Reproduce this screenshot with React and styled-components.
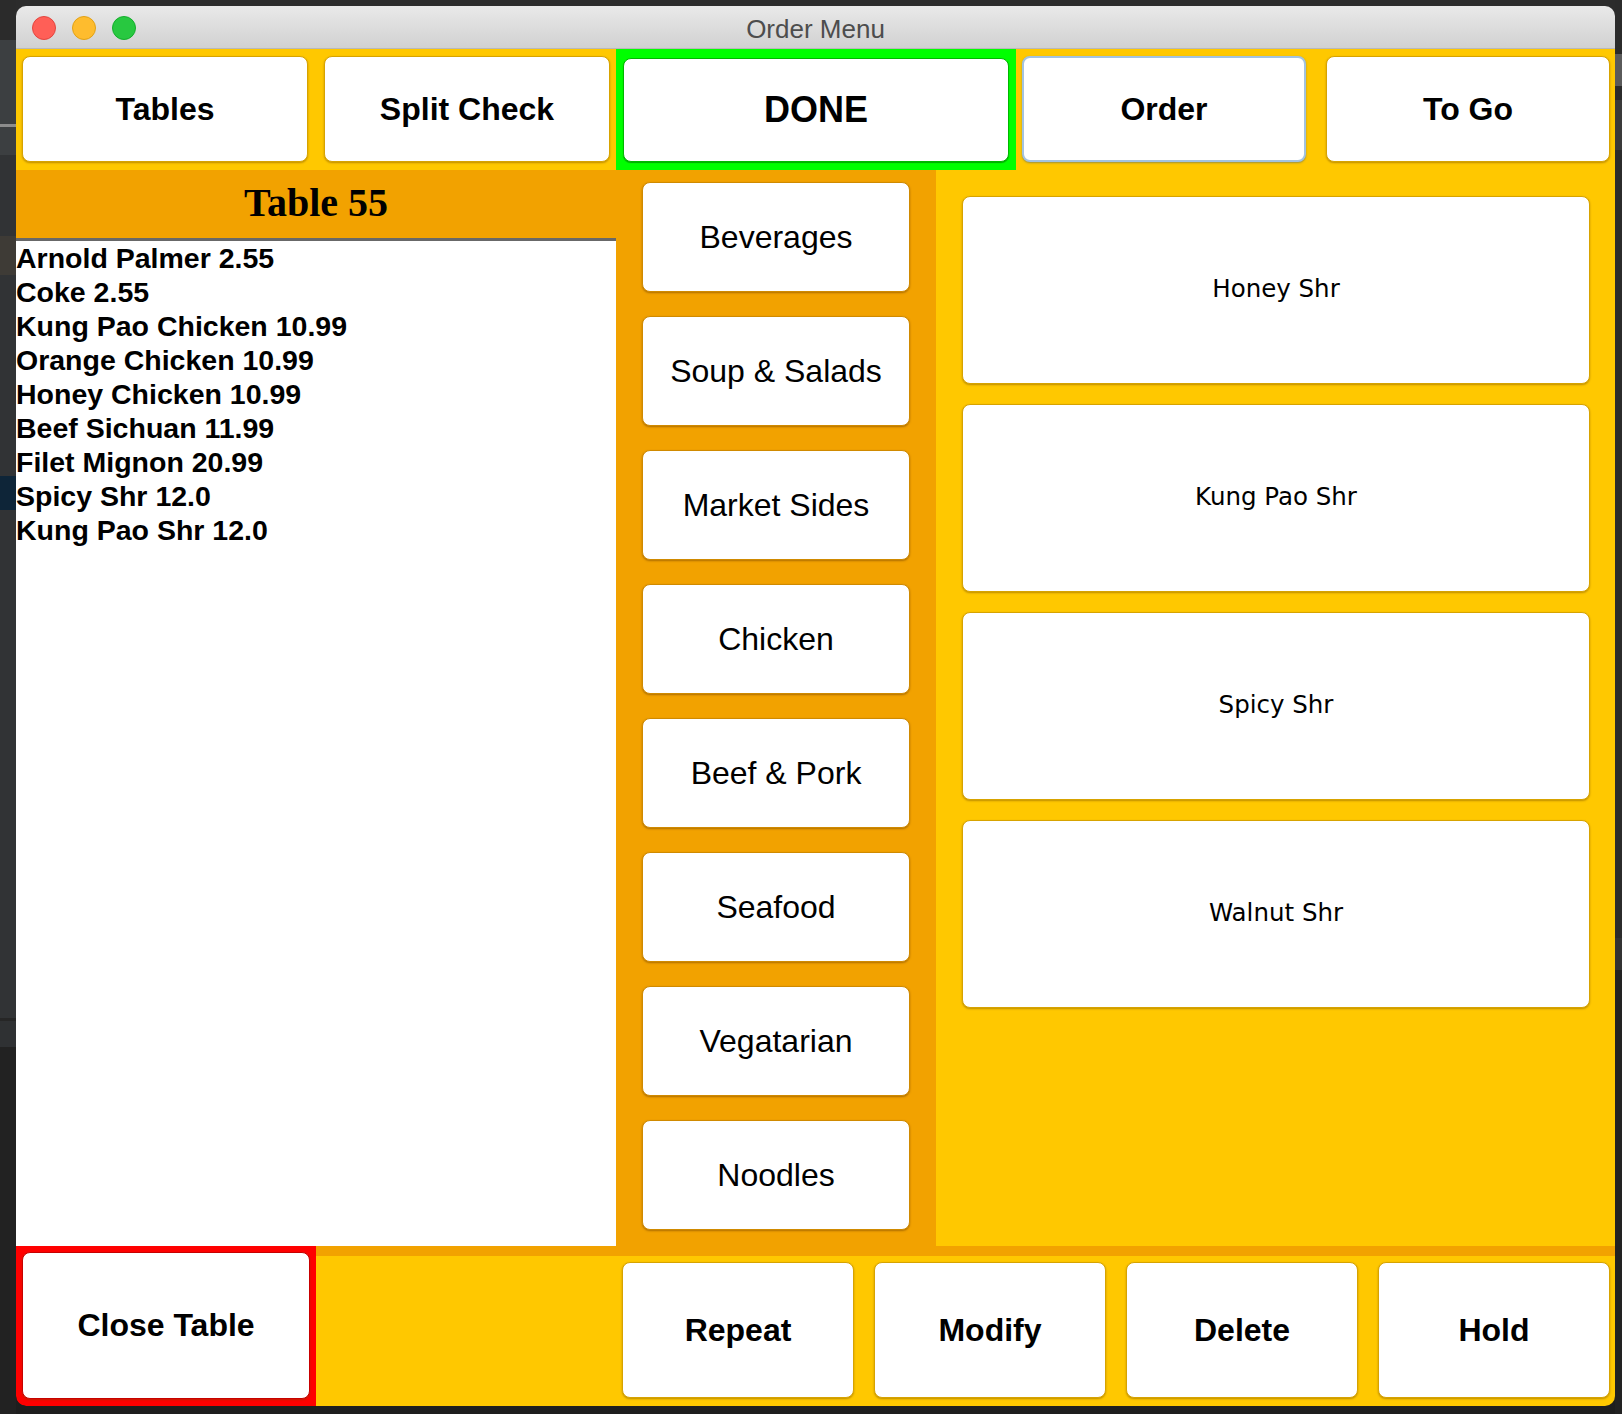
import React from 'react'
import styled, { createGlobalStyle } from 'styled-components'

const GlobalStyle = createGlobalStyle`
  html, body {
    margin: 0;
    padding: 0;
    background: #252525;
  }
  * {
    box-sizing: border-box;
  }
`

const YELLOW = '#ffc800'
const ORANGE = '#f2a200'

const Desktop = styled.div`
  display: flex;
  align-items: flex-start;
  width: 1622px;
  height: 1414px;
  background: linear-gradient(#2c2c2c 0, #2c2c2c 60px, #232323 1000px, #1e1e1e 100%);
  overflow: hidden;
`

const SideStrip = styled.div`
  display: flex;
  flex-direction: column;
  width: ${({ w }) => w}px;
  height: 1414px;
  flex-shrink: 0;
`

const Band = styled.div`
  height: ${({ h }) => h}px;
  background: ${({ color }) => color};
  flex-shrink: 0;
  ${({ grow }) => grow && 'flex: 1;'}
`

const Window = styled.div`
  display: flex;
  flex-direction: column;
  width: 1599px;
  height: 1400px;
  margin-top: 6px;
  border-radius: 10px;
  overflow: hidden;
  flex-shrink: 0;
  font-family: "Liberation Sans", Arial, sans-serif;
`

const TitleBar = styled.div`
  position: relative;
  display: flex;
  align-items: center;
  justify-content: center;
  height: 43px;
  flex-shrink: 0;
  background: linear-gradient(#e9e9e9, #d1d1d1);
  border-bottom: 1px solid #b8b8b8;
`

const Lights = styled.div`
  position: absolute;
  left: 16px;
  top: 10px;
  display: flex;
  gap: 16px;
`

const Light = styled.div`
  width: 24px;
  height: 24px;
  border-radius: 50%;
  background: ${({ color }) => color};
  border: 1px solid ${({ edge }) => edge};
`

const Title = styled.div`
  font-size: 26px;
  color: #4d4d4d;
  margin-top: 4px;
`

const TopBar = styled.div`
  display: flex;
  height: 121px;
  flex-shrink: 0;
  background: ${YELLOW};
  padding-left: 6px;
`

const Button = styled.div`
  display: flex;
  align-items: center;
  justify-content: center;
  background: #ffffff;
  border-radius: 8px;
  border: 1px solid #d7a300;
  box-shadow: 0 1px 2px rgba(110, 70, 0, 0.45);
  color: #000;
  flex-shrink: 0;
`

const TopButton = styled(Button)`
  width: ${({ w }) => w}px;
  height: 106px;
  margin-top: 7px;
  margin-right: ${({ gap }) => gap}px;
  font-size: 32px;
  font-weight: 700;
  ${({ focused }) => focused && 'border: 2px solid #a3c3e0; box-shadow: 0 1px 2px rgba(60, 90, 120, 0.5);'}
`

const DoneFrame = styled.div`
  display: flex;
  width: 400px;
  height: 121px;
  padding: 9px 7px 8px 7px;
  margin-right: 6px;
  background: #00ff00;
  flex-shrink: 0;
`

const DoneButton = styled(Button)`
  flex: 1;
  font-size: 36px;
  font-weight: 700;
  border-color: #00b800;
  box-shadow: 0 1px 1px rgba(0, 80, 0, 0.5);
`

const Middle = styled.div`
  display: flex;
  height: 1076px;
  flex-shrink: 0;
`

const OrderPanel = styled.div`
  display: flex;
  flex-direction: column;
  width: 600px;
  background: #ffffff;
`

const TableHeader = styled.div`
  display: flex;
  align-items: center;
  justify-content: center;
  height: 68px;
  padding-bottom: 4px;
  background: ${ORANGE};
  font-family: "Liberation Serif", "Times New Roman", serif;
  font-weight: 700;
  font-size: 40px;
  color: #000;
`

const Divider = styled.div`
  height: 3px;
  background: #686868;
`

const OrderList = styled.div`
  flex: 1;
`

const OrderLine = styled.div`
  font-size: 28.5px;
  font-weight: 700;
  line-height: 34px;
  color: #000;
  white-space: nowrap;
`

const CategoryColumn = styled.div`
  display: flex;
  flex-direction: column;
  gap: 24px;
  width: 320px;
  padding: 12px 26px 0 26px;
  background: ${ORANGE};
`

const CategoryButton = styled(Button)`
  height: 110px;
  font-size: 32px;
  border-color: #d08a00;
  box-shadow: 0 1px 2px rgba(110, 60, 0, 0.5);
`

const ItemPanel = styled.div`
  display: flex;
  flex-direction: column;
  gap: 20px;
  flex: 1;
  padding: 26px 25px 0 26px;
  background: ${YELLOW};
`

const ItemButton = styled(Button)`
  height: 188px;
  font-family: "DejaVu Sans", Verdana, sans-serif;
  font-size: 24.5px;
  padding-bottom: 4px;
`

const BottomBar = styled.div`
  display: flex;
  flex: 1;
`

const CloseFrame = styled.div`
  display: flex;
  width: 300px;
  padding: 6px 6px 7px 6px;
  background: #ff0000;
  border-bottom-left-radius: 10px;
`

const CloseButton = styled(Button)`
  flex: 1;
  font-size: 32px;
  font-weight: 700;
  border-color: #c80000;
`

const ActionArea = styled.div`
  display: flex;
  flex: 1;
  background: ${YELLOW};
  border-top: 10px solid ${ORANGE};
  padding: 6px 5px 8px 306px;
  gap: 20px;
`

const ActionButton = styled(Button)`
  width: 232px;
  font-size: 32px;
  font-weight: 700;
`

const orders = [
  'Arnold Palmer 2.55',
  'Coke 2.55',
  'Kung Pao Chicken 10.99',
  'Orange Chicken 10.99',
  'Honey Chicken 10.99',
  'Beef Sichuan 11.99',
  'Filet Mignon 20.99',
  'Spicy Shr 12.0',
  'Kung Pao Shr 12.0',
]

const categories = [
  'Beverages',
  'Soup & Salads',
  'Market Sides',
  'Chicken',
  'Beef & Pork',
  'Seafood',
  'Vegatarian',
  'Noodles',
]

const items = ['Honey Shr', 'Kung Pao Shr', 'Spicy Shr', 'Walnut Shr']

const actions = ['Repeat', 'Modify', 'Delete', 'Hold']

const App = () => {
  return (
    <>
      <GlobalStyle />
      <Desktop>
        <SideStrip w={16}>
          <Band h={40} color="#2b2b2b" />
          <Band h={84} color="#3c3f41" />
          <Band h={3} color="#8c8c8c" />
          <Band h={28} color="#3c3f41" />
          <Band h={81} color="#313335" />
          <Band h={39} color="#3e3b36" />
          <Band h={201} color="#313335" />
          <Band h={34} color="#0e2538" />
          <Band h={508} color="#313335" />
          <Band h={3} color="#262626" />
          <Band h={26} color="#2f3133" />
          <Band grow color="#222222" />
        </SideStrip>
        <Window>
          <TitleBar>
            <Lights>
              <Light color="#ff5f57" edge="#e2463f" />
              <Light color="#febc2e" edge="#e1a116" />
              <Light color="#28c840" edge="#14ae2c" />
            </Lights>
            <Title>Order Menu</Title>
          </TitleBar>
          <TopBar>
            <TopButton w={286} gap={16}>Tables</TopButton>
            <TopButton w={286} gap={6}>Split Check</TopButton>
            <DoneFrame>
              <DoneButton>DONE</DoneButton>
            </DoneFrame>
            <TopButton w={284} gap={20} focused>Order</TopButton>
            <TopButton w={284} gap={0}>To Go</TopButton>
          </TopBar>
          <Middle>
            <OrderPanel>
              <TableHeader>Table 55</TableHeader>
              <Divider />
              <OrderList>
                {orders.map((o) => (
                  <OrderLine key={o}>{o}</OrderLine>
                ))}
              </OrderList>
            </OrderPanel>
            <CategoryColumn>
              {categories.map((c) => (
                <CategoryButton key={c}>{c}</CategoryButton>
              ))}
            </CategoryColumn>
            <ItemPanel>
              {items.map((i) => (
                <ItemButton key={i}>{i}</ItemButton>
              ))}
            </ItemPanel>
          </Middle>
          <BottomBar>
            <CloseFrame>
              <CloseButton>Close Table</CloseButton>
            </CloseFrame>
            <ActionArea>
              {actions.map((a) => (
                <ActionButton key={a}>{a}</ActionButton>
              ))}
            </ActionArea>
          </BottomBar>
        </Window>
        <SideStrip w={7}>
          <Band h={54} color="#2b2b2b" />
          <Band h={32} color="#5a5a5a" />
          <Band h={14} color="#2b2b2b" />
          <Band h={50} color="#3a3a3a" />
          <Band h={788} color="#2b2b2b" />
          <Band h={32} color="#333333" />
          <Band grow color="#222222" />
        </SideStrip>
      </Desktop>
    </>
  )
}

export default App
